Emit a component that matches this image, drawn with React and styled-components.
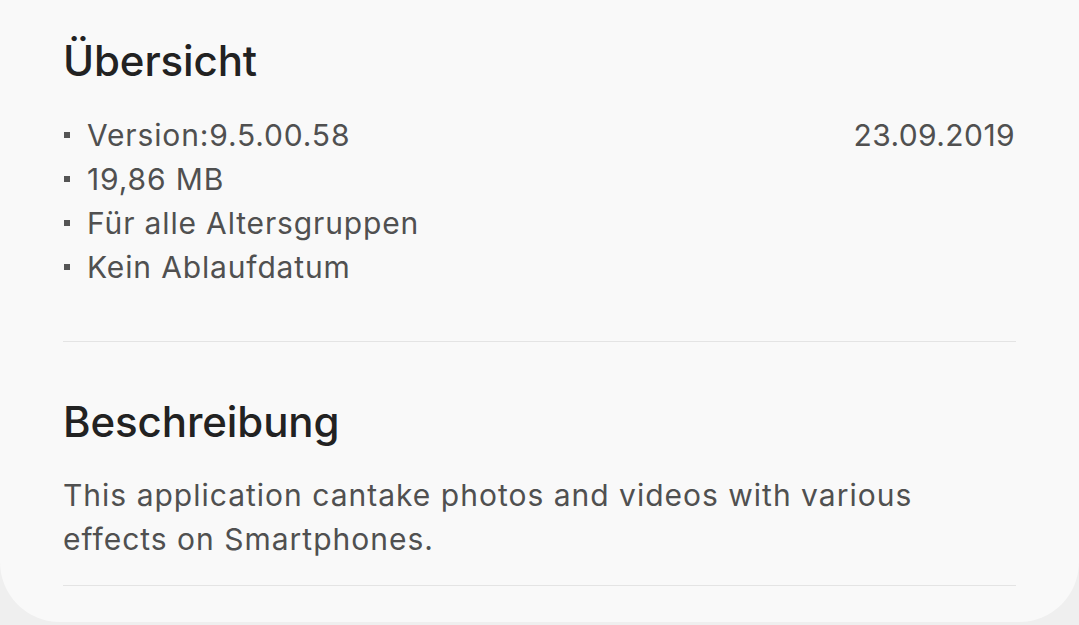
import React from "react";
import styled, { createGlobalStyle } from "styled-components";

const GlobalStyle = createGlobalStyle`
  html, body {
    margin: 0;
    padding: 0;
    background: #efefef;
    font-family: Inter, Roboto, "Noto Sans", sans-serif;
  }
`;

// The rounded sheet that holds both sections
const Card = styled.div`
  background: #f9f9f9;
  height: 622px;
  border-radius: 0 0 60px 60px;
  padding: 0 63px;
  box-sizing: border-box;
  display: flex;
  flex-direction: column;
`;

const Section = styled.section`
  padding-top: ${(p) => p.$top}px;
  padding-bottom: ${(p) => p.$bottom}px;
  border-bottom: 1px solid #e4e4e4;
`;

const Title = styled.h2`
  margin: 0 0 ${(p) => p.$gap}px;
  font-size: 42px;
  line-height: 52px;
  font-weight: 500;
  color: #222;
  letter-spacing: -0.1px;
`;

const InfoRow = styled.div`
  display: flex;
  justify-content: space-between;
  align-items: flex-start;
`;

const Facts = styled.ul`
  list-style: none;
  margin: 0;
  padding: 0;
`;

const Fact = styled.li`
  display: flex;
  align-items: center;
  gap: 17px;
  font-size: 30px;
  line-height: 44px;
  color: #505050;
  letter-spacing: 0.85px;

  &::before {
    content: "";
    width: 6px;
    height: 6px;
    background: #555;
    flex: none;
    margin-left: 1px;
  }
`;

const DateText = styled.span`
  font-size: 30px;
  line-height: 44px;
  color: #505050;
  letter-spacing: 0.4px;
  margin-right: 1px;
`;

const Body = styled.p`
  margin: 0;
  font-size: 30px;
  line-height: 44px;
  color: #505050;
  letter-spacing: 1px;
  max-width: 900px;
`;

export default function App() {
  return (
    <>
      <GlobalStyle />
      <Card>
        <Section $top={35} $bottom={52}>
          <Title $gap={26}>Übersicht</Title>
          <InfoRow>
            <Facts>
              <Fact>Version:9.5.00.58</Fact>
              <Fact>19,86 MB</Fact>
              <Fact>Für alle Altersgruppen</Fact>
              <Fact>Kein Ablaufdatum</Fact>
            </Facts>
            <DateText>23.09.2019</DateText>
          </InfoRow>
        </Section>
        <Section $top={54} $bottom={24}>
          <Title $gap={25}>Beschreibung</Title>
          <Body>
            This application cantake photos and videos with various effects on
            Smartphones.
          </Body>
        </Section>
      </Card>
    </>
  );
}
